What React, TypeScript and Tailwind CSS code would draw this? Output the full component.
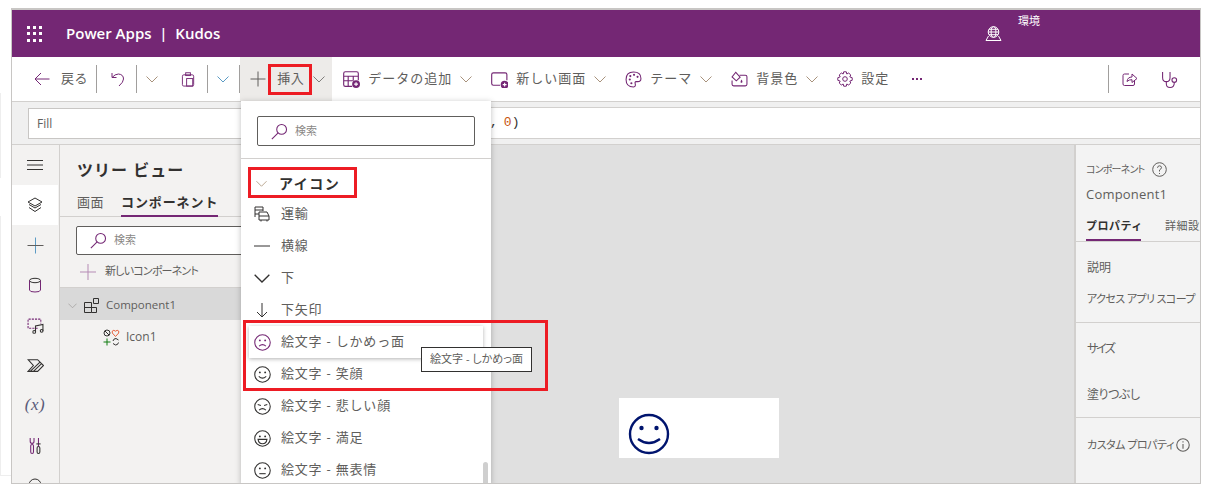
import type { ReactNode } from 'react';

const PURPLE = '#742774';

function Ico({ size = 16, color = PURPLE, sw = 1, children }: { size?: number; color?: string; sw?: number; children: ReactNode }) {
  return (
    <svg width={size} height={size} viewBox="0 0 16 16" fill="none" stroke={color} strokeWidth={sw} className="shrink-0">
      {children}
    </svg>
  );
}

const Chevron = ({ color = '#a8927c', size = 12 }: { color?: string; size?: number }) => (
  <svg width={size} height={size} viewBox="0 0 12 12" fill="none" stroke={color} strokeWidth="1" className="shrink-0">
    <path d="M0.5 3.5 L6 9 L11.5 3.5" />
  </svg>
);

const SearchIcon = () => (
  <Ico size={17}>
    <circle cx="10" cy="6" r="4.6" />
    <path d="M6.7 9.3 L0.8 15.2" />
  </Ico>
);

const Face = ({ mood, color = '#323130' }: { mood: 'frown' | 'smile' | 'sad' | 'happy' | 'flat'; color?: string }) => (
  <Ico size={17} color={color}>
    <circle cx="8" cy="8" r="7.3" />
    {mood === 'sad' ? (
      <path d="M3.5 6.2 L6.5 7 M12.5 6.2 L9.5 7" />
    ) : (
      <>
        <circle cx="5.5" cy="6" r="0.9" fill={color} stroke="none" />
        <circle cx="10.5" cy="6" r="0.9" fill={color} stroke="none" />
      </>
    )}
    {mood === 'frown' && <path d="M4.8 11.5 Q8 8.5 11.2 11.5" />}
    {mood === 'sad' && <path d="M4.8 11.5 Q8 8.5 11.2 11.5" />}
    {mood === 'smile' && <path d="M4.5 9.8 Q8 13 11.5 9.8" />}
    {mood === 'happy' && <path d="M3.8 8.8 H12.2 Q11.5 13 8 13 Q4.5 13 3.8 8.8 Z" />}
    {mood === 'flat' && <path d="M5 11 H11" />}
  </Ico>
);

function ToolItem({ icon, label, chevron = true, className = '' }: { icon: ReactNode; label: string; chevron?: boolean; className?: string }) {
  return (
    <div className={`flex items-center ${className}`}>
      {icon}
      <span className="ml-[8px] tracking-[1px]">{label}</span>
      {chevron && (
        <span className="ml-2">
          <Chevron />
        </span>
      )}
    </div>
  );
}

const Sep = ({ className = '' }: { className?: string }) => <div className={`w-px h-[28px] bg-[#a19f9d] shrink-0 ${className}`} />;

function Toolbar() {
  return (
    <div className="h-[45px] bg-white flex items-center text-[13px] text-[#605e5c] border-b border-[#d2d0ce] shrink-0">
      <svg width="16" height="14" viewBox="0 0 16 14" fill="none" stroke={PURPLE} className="ml-[22px] shrink-0">
        <path d="M15.5 7 H1 M7 1 L1 7 L7 13" />
      </svg>
      <span className="ml-[11px] tracking-[0.6px]">戻る</span>
      <Sep className="ml-[8px]" />
      <span className="ml-[13px]">
        <Ico size={16}>
          <path d="M2 2 V6.5 H6.5 M2 6.5 Q5 3 8.5 3 Q13.5 3.5 13.5 8 Q13.5 11 9 15" />
        </Ico>
      </span>
      <Sep className="ml-[10px]" />
      <span className="ml-[9px]">
        <Chevron />
      </span>
      <span className="ml-[23px]">
        <Ico size={15}>
          <rect x="1.5" y="3" width="12" height="12" rx="1.5" />
          <rect x="5" y="0.8" width="5" height="3" />
          <rect x="6" y="7" width="6.5" height="8" />
        </Ico>
      </span>
      <Sep className="ml-[11px]" />
      <span className="ml-[9px]">
        <Chevron color="#5b9bc4" />
      </span>
      <Sep className="ml-[10px]" />
      <div className="w-[92px] h-[44px] bg-[#edebe9] flex items-center shrink-0">
        <svg width="16" height="16" viewBox="0 0 16 16" stroke="#605e5c" className="ml-[10px]">
          <path d="M8 0.5 V15.5 M0.5 8 H15.5" />
        </svg>
        <span className="ml-[11px] tracking-[0.6px]">挿入</span>
        <span className="ml-[9px]">
          <Chevron color="#7f7d7b" />
        </span>
      </div>
      <ToolItem
        className="ml-[10px]"
        label="データの追加"
        icon={
          <Ico size={18}>
            <path d="M9 14.5 H3 Q1.5 14.5 1.5 13 V3 Q1.5 1.5 3 1.5 H13 Q14.5 1.5 14.5 3 V9 M1.5 5.5 H14.5 M1.5 9.5 H9.5 M5.5 5.5 V14.5 M10 5.5 V9.5" />
            <circle cx="12.5" cy="12.5" r="3.5" fill={PURPLE} stroke="none" />
            <path d="M10.8 12.5 H14.2 M12.5 10.8 V14.2" stroke="#fff" />
          </Ico>
        }
      />
      <ToolItem
        className="ml-[18px]"
        label="新しい画面"
        icon={
          <Ico size={18}>
            <path d="M9 13.5 H3 Q1.5 13.5 1.5 12 V4 Q1.5 2.5 3 2.5 H13.5 Q15 2.5 15 4 V9" />
            <circle cx="13" cy="13" r="3.5" fill={PURPLE} stroke="none" />
            <path d="M11.3 13 H14.7 M13 11.3 V14.7" stroke="#fff" />
          </Ico>
        }
      />
      <ToolItem
        className="ml-[19px]"
        label="テーマ"
        icon={
          <Ico size={17}>
            <path d="M8 1 Q15 1 15 7 Q15 10 12 10 H10.5 Q9 10.2 9.6 12 Q10.4 14.8 8 15 Q1 15 1 8 Q1 1 8 1 Z" />
            <circle cx="4.5" cy="8" r="1" fill={PURPLE} stroke="none" />
            <circle cx="5" cy="4.8" r="1" fill={PURPLE} stroke="none" />
            <circle cx="8.5" cy="3.6" r="1" fill={PURPLE} stroke="none" />
            <circle cx="11.8" cy="5.5" r="1" fill={PURPLE} stroke="none" />
            <circle cx="6" cy="11.5" r="1" fill={PURPLE} stroke="none" />
          </Ico>
        }
      />
      <ToolItem
        className="ml-[19px]"
        label="背景色"
        icon={
          <Ico size={17}>
            <path d="M8 4 H13.5 Q15 4 15 5.5 V12.5 Q15 14 13.5 14 H2.5 Q1 14 1 12.5 V9" />
            <path d="M4.5 1.2 L8.6 5.8 L5 9.3 L1 5.5 Z" />
            <path d="M10 8 Q11.2 9.8 10.6 10.8 Q9.6 11.6 9 10.6 Q8.8 9.6 10 8 Z" fill={PURPLE} stroke="none" />
          </Ico>
        }
      />
      <ToolItem
        className="ml-[19px]"
        label="設定"
        chevron={false}
        icon={
          <Ico size={16}>
            <path d="M6.7 0.8 H9.3 L9.8 3 L11.7 2 L13.8 4 L12.8 5.9 L15.2 6.7 V9.3 L12.8 10.1 L13.8 12 L11.7 14 L9.8 13 L9.3 15.2 H6.7 L6.2 13 L4.3 14 L2.2 12 L3.2 10.1 L0.8 9.3 V6.7 L3.2 5.9 L2.2 4 L4.3 2 L6.2 3 Z" />
            <circle cx="8" cy="8" r="2.3" />
          </Ico>
        }
      />
      <div className="ml-[23px] flex gap-[2px]">
        <span className="w-[2px] h-[2px] bg-[#742774]" />
        <span className="w-[2px] h-[2px] bg-[#742774]" />
        <span className="w-[2px] h-[2px] bg-[#742774]" />
      </div>
      <div className="ml-auto flex items-center">
        <Sep />
        <span className="ml-[13px]">
          <Ico size={16}>
            <path d="M7 3 H2.5 Q1 3 1 4.5 V13 Q1 14.5 2.5 14.5 H11 Q12.5 14.5 12.5 13 V10" />
            <path d="M5 10.5 Q5.5 6 10 6 V3 L15 7.5 L10 11.5 V8.7 Q7 8.5 5 10.5 Z" />
          </Ico>
        </span>
        <span className="ml-[23px] mr-[22px]">
          <Ico size={17}>
            <path d="M1.5 1 V6 Q1.5 10 5 10 Q8.5 10 8.5 6 V1" />
            <path d="M5 10 V12 Q5 15.5 8.5 15.5 Q12.5 15.5 12.5 11" />
            <circle cx="12.5" cy="8.5" r="2.2" />
          </Ico>
        </span>
      </div>
    </div>
  );
}

function RailIcon({ active, children }: { active?: boolean; children: ReactNode }) {
  return <div className={`h-[40px] w-[46px] flex items-center justify-center ${active ? 'bg-white' : ''}`}>{children}</div>;
}

function Rail() {
  return (
    <div className="w-[48px] shrink-0 bg-[#f3f2f1] border-r border-[#d2d0ce] overflow-hidden">
      <RailIcon>
        <svg width="16" height="12" viewBox="0 0 16 12" stroke="#323130">
          <path d="M0 1.5 H16 M0 6 H16 M0 10.5 H16" />
        </svg>
      </RailIcon>
      <RailIcon active>
        <Ico size={16} color="#323130">
          <path d="M8 1 L15 5 L8 9 L1 5 Z M2 7.5 L8 11 L14 7.5 M2 10.5 L8 14.5 L14 10.5" />
        </Ico>
      </RailIcon>
      <RailIcon>
        <svg width="17" height="17" viewBox="0 0 17 17" stroke="#605e5c">
          <path d="M8.5 0.5 V16.5" stroke="#5b9bc4" />
          <path d="M0.5 8.5 H16.5" />
        </svg>
      </RailIcon>
      <RailIcon>
        <Ico size={16} color="#323130">
          <ellipse cx="8" cy="3.5" rx="5.5" ry="2.2" />
          <path d="M2.5 3.5 V13 Q2.5 15 8 15 Q13.5 15 13.5 13 V3.5" stroke={PURPLE} />
        </Ico>
      </RailIcon>
      <RailIcon>
        <Ico size={17} color="#323130">
          <path d="M10 10.5 H1 V2 H13 V6" stroke={PURPLE} strokeDasharray="2 1" />
          <path d="M8 14 V8.5 L15 7 V13" />
          <circle cx="6.8" cy="14" r="1.3" />
          <circle cx="13.8" cy="13" r="1.3" />
        </Ico>
      </RailIcon>
      <RailIcon>
        <Ico size={17} color="#323130">
          <path d="M1 2.5 H10 L15.5 8 L10 13.5 H1 L6 8 Z M3 13.5 L12 5 M6 13.5 L13.5 6.5" />
        </Ico>
      </RailIcon>
      <RailIcon>
        <span className="font-['Liberation_Serif',serif] italic font-normal text-[17px] tracking-[0.5px] text-[#5a5a78]">(x)</span>
      </RailIcon>
      <RailIcon>
        <Ico size={17} color={PURPLE}>
          <rect x="3.5" y="7" width="2.6" height="8.5" rx="1.3" />
          <rect x="9.5" y="9" width="2.6" height="6.5" rx="1.3" stroke="#323130" />
          <path d="M3 1 V4 Q3 6 4.8 6 Q6.6 6 6.6 4 V1 M10.8 1 V9" />
          <path d="M8.8 6.5 H12.8" stroke="#323130" />
        </Ico>
      </RailIcon>
      <RailIcon>
        <Ico size={16} color="#323130">
          <circle cx="8" cy="8" r="6" />
        </Ico>
      </RailIcon>
    </div>
  );
}

function TreePanel() {
  return (
    <div className="w-[430px] shrink-0 bg-[#f3f2f1] text-[#605e5c]">
      <div className="pl-[17px] h-[72px] border-b border-[#d2d0ce] flex flex-col">
        <div className="mt-[14px] text-[16px] font-bold text-[#323130] tracking-[1px] leading-[22px]">ツリー ビュー</div>
        <div className="mt-[12px] flex text-[13px] leading-[18px]">
          <span className="tracking-[0.5px]">画面</span>
          <span className="ml-[17px] h-[24px] border-b-2 border-[#742774] font-semibold text-[#323130] tracking-[0.9px]">コンポーネント</span>
        </div>
      </div>
      <div className="ml-[16px] mt-[9px] w-[300px] h-[29px] bg-white border border-[#605e5c] rounded-[2px] flex items-center pl-[13px] text-[11px] text-[#8a8886]">
        <SearchIcon />
        <span className="ml-[7px]">検索</span>
      </div>
      <div className="ml-[20px] mt-[5px] flex items-center h-[23px] text-[11px] tracking-[-0.8px] [font-feature-settings:'palt']">
        <svg width="16" height="16" viewBox="0 0 16 16" stroke="#b58bb5">
          <path d="M8 0 V16 M0 8 H16" />
        </svg>
        <span className="ml-[9px]">新しいコンポーネント</span>
      </div>
      <div className="mt-[4px] h-[33px] bg-[#d9d9d9] border-t border-[#d2d0ce] flex items-center pl-[8px] pt-[2px] text-[12px]">
        <Chevron size={9} color="#a19f9d" />
        <svg width="15" height="15" viewBox="0 0 15 15" fill="none" stroke="#323130" className="ml-[7px]">
          <path d="M0.5 4.5 H7.5 V14.5 H0.5 Z M0.5 9.5 H12.5 V14.5 H7.5 M9.5 0.5 H14.5 V5.5 H9.5 Z" />
        </svg>
        <span className="ml-[7px] text-[11.5px]">Component1</span>
      </div>
      <div className="h-[34px] flex items-center pl-[43px] text-[12px]">
        <svg width="17" height="17" viewBox="0 0 17 17" fill="none" stroke="#323130">
          <circle cx="4" cy="4" r="3" />
          <path d="M2 2 L6 6" />
          <path d="M12.5 7.5 L9.3 4 Q8.5 1.5 10.8 1.3 L12.5 2.2 L14.2 1.3 Q16.5 1.5 15.7 4 Z" stroke="#e8603c" />
          <path d="M4 9.5 V16.5 M0.5 13 H7.5" stroke="#107c10" />
          <path d="M10 12 Q10.5 9.5 13 9.5 L15.5 11 M15.5 13.5 Q15 16 12.5 16 L10 14.5" />
        </svg>
        <span className="ml-[6px]">Icon1</span>
      </div>
    </div>
  );
}

function PropsPanel() {
  return (
    <div className="w-[126px] shrink-0 bg-[#f3f3f3] border-l-2 border-[#d2d0ce] overflow-hidden text-[12px] text-[#605e5c] whitespace-nowrap">
      <div className="pl-[10px] pt-[15px] h-[97px] border-b border-[#d2d0ce] flex flex-col">
        <div className="flex items-center h-[18px] text-[10px] tracking-[-0.8px] [font-feature-settings:'palt']">
          コンポーネント
          <svg width="15" height="15" viewBox="0 0 15 15" fill="none" stroke="#605e5c" className="ml-[8px]">
            <circle cx="7.5" cy="7.5" r="6.8" />
            <path d="M5.5 5.8 Q5.7 3.8 7.5 3.8 Q9.6 3.9 9.5 5.7 Q9.3 6.9 7.5 8 V9.5 M7.5 11 V12" />
          </svg>
        </div>
        <div className="mt-[7px] text-[13px] leading-[18px] tracking-[0.2px] text-[#605e5c]">Component1</div>
        <div className="mt-[15px] flex text-[11px]">
          <span className="h-[23px] w-[55px] border-b-2 border-[#742774] font-semibold text-[#323130] tracking-[0.5px]">プロパティ</span>
          <span className="ml-[24px] tracking-[0.5px]">詳細設定</span>
        </div>
      </div>
      <div className="pl-[11px] h-[81px] border-b border-[#d2d0ce] flex flex-col">
        <div className="mt-[17px] leading-[18px]">説明</div>
        <div className="mt-[13px] leading-[18px] text-[11px] tracking-[-0.6px] [font-feature-settings:'palt']">アクセス アプリ スコープ</div>
      </div>
      <div className="pl-[11px] h-[95px] border-b border-[#d2d0ce] flex flex-col">
        <div className="mt-[17px] leading-[18px] tracking-[-2px] [font-feature-settings:'palt']">サイズ</div>
        <div className="mt-[28px] leading-[18px] tracking-[-0.5px] [font-feature-settings:'palt']">塗りつぶし</div>
      </div>
      <div className="pl-[11px] pt-[19px] flex items-center text-[11px] tracking-[-0.5px] [font-feature-settings:'palt']">
        カスタム プロパティ
        <svg width="14" height="14" viewBox="0 0 13 13" fill="none" stroke="#605e5c" className="ml-[2px]">
          <circle cx="6.5" cy="6.5" r="5.8" />
          <path d="M6.5 5.5 V10 M6.5 3 V4.2" />
        </svg>
      </div>
    </div>
  );
}

function InsertMenu() {
  const rows: { icon: ReactNode; label: string; hover?: boolean }[] = [
    {
      label: '運輸',
      icon: (
        <Ico size={16} color="#323130">
          <path d="M1 11 V1 H9 V5 M1 4 H9 M1 8 H5 M5 6 H13 L15 10 V14 H5 Z M5 10 H15 M7 14 V15.5 M13 14 V15.5" />
        </Ico>
      ),
    },
    {
      label: '横線',
      icon: (
        <Ico size={16} color="#323130">
          <path d="M0 8 H16" />
        </Ico>
      ),
    },
    { label: '下', icon: <Chevron size={16} color="#323130" /> },
    {
      label: '下矢印',
      icon: (
        <Ico size={16} color="#323130">
          <path d="M8 1 V15 M3 10 L8 15 L13 10" />
        </Ico>
      ),
    },
    { label: '絵文字 - しかめっ面', icon: <Face mood="frown" color={PURPLE} />, hover: true },
    { label: '絵文字 - 笑顔', icon: <Face mood="smile" /> },
    { label: '絵文字 - 悲しい顔', icon: <Face mood="sad" /> },
    { label: '絵文字 - 満足', icon: <Face mood="happy" /> },
    { label: '絵文字 - 無表情', icon: <Face mood="flat" /> },
  ];
  return (
    <div className="absolute left-[229px] top-[91px] w-[250px] h-[384px] bg-white shadow-[0_1px_6px_rgba(0,0,0,0.25)] overflow-hidden text-[13px] text-[#605e5c]">
      <div className="h-[58px] border-b border-[#d2d0ce] pt-[15px] pl-[16px]">
        <div className="w-[218px] h-[30px] border border-[#605e5c] rounded-[2px] flex items-center pl-[13px] text-[11px] text-[#8a8886]">
          <SearchIcon />
          <span className="ml-[7px]">検索</span>
        </div>
      </div>
      <div className="h-[39px] pt-[10px] pl-[15px] flex items-center">
        <Chevron size={11} color="#b5a088" />
        <span className="ml-[12px] text-[14px] font-bold text-[#323130] tracking-[1.5px]">アイコン</span>
      </div>
      <div className="pl-[8px] w-[242px]">
        {rows.map((r) => (
          <div
            key={r.label}
            className={`h-[32px] pl-[5px] flex items-center ${r.hover ? 'bg-white shadow-[0_1px_4px_rgba(0,0,0,0.3)]' : ''}`}
          >
            <span className="w-[16px] flex justify-center">{r.icon}</span>
            <span className="ml-[11px] tracking-[0.8px]">{r.label}</span>
          </div>
        ))}
      </div>
      <div className="absolute right-[3px] bottom-0 w-[5px] h-[23px] rounded-t-[3px] bg-[#cfcfcf]" />
    </div>
  );
}

export default function App() {
  return (
    <div className="w-[1213px] h-[493px] bg-white overflow-hidden font-['Open_Sans','Noto_Sans_CJK_JP',sans-serif] flex pt-[8px]">
      {/* Faint edges of whatever sits behind the captured window */}
      <div className="w-[11px] shrink-0 flex flex-col pt-[85px]">
        <div className="h-[85px] border-l border-[#eeeeee]" />
        <div className="mt-[38px] h-[260px] border-l border-b border-[#eeeeee]" />
      </div>
      <div className="relative w-[1190px] h-[476px] border-x border-b border-t-2 border-[#c8c6c4] flex flex-col overflow-hidden">
        {/* Header */}
        <div className="h-[47px] bg-[#742774] text-white flex items-center shrink-0">
          <div className="ml-[15px] grid grid-cols-3 gap-[3.5px] w-[15px]">
            {Array.from({ length: 9 }).map((_, i) => (
              <span key={i} className="w-[3px] h-[3px] bg-white" />
            ))}
          </div>
          <span className="ml-[24px] text-[15px] font-semibold">Power Apps&nbsp; |&nbsp; Kudos</span>
          <div className="ml-auto mr-[160px] self-start flex items-start">
            <svg width="17" height="15" viewBox="0 0 16 15" fill="none" stroke="#fff" className="mt-[16px]">
              <circle cx="8" cy="6" r="5.3" />
              <ellipse cx="8" cy="6" rx="2.4" ry="5.3" />
              <path d="M2.7 6 H13.3 M3.5 3.3 H12.5 M3.5 8.7 H12.5 M3 10 L0.5 14.5 H15.5 L13 10" />
            </svg>
            <span className="ml-[16px] mt-[3px] text-[11px] leading-[16px]">環境</span>
          </div>
        </div>

        <Toolbar />

        {/* Formula bar */}
        <div className="h-[42px] bg-[#f0f0f0] flex items-start pt-[5px] shrink-0">
          <div className="ml-[16px] mt-[1px] w-[300px] h-[31px] bg-white border border-[#c8c6c4] flex items-center pl-[8px] text-[12px] text-[#605e5c]">
            Fill
          </div>
          <div className="flex-1 h-[32px] bg-white border-y border-[#d2d0ce] flex items-center pl-[162px] font-['Liberation_Mono','DejaVu_Sans_Mono',monospace] text-[13px] text-[#323130]">
            ,<span className="ml-[6px] text-[#c8550e]">0</span>)
          </div>
        </div>

        {/* Workspace */}
        <div className="flex-1 flex min-h-0 border-t border-[#d2d0ce]">
          <Rail />
          <TreePanel />
          <div className="relative flex-1 bg-[#e0e0e0]">
            <div className="absolute left-[129px] top-[253px] w-[160px] h-[60px] bg-white">
              <svg width="42" height="42" viewBox="0 0 42 42" fill="none" stroke="#00146e" strokeWidth="2.4" className="absolute left-[9px] top-[15px]">
                <circle cx="21" cy="21" r="19" />
                <circle cx="13.5" cy="15" r="2.2" fill="#00146e" stroke="none" />
                <circle cx="28.5" cy="15" r="2.2" fill="#00146e" stroke="none" />
                <path d="M10 26 Q21 34 32 26" />
              </svg>
            </div>
          </div>
          <PropsPanel />
        </div>

        <InsertMenu />

        {/* Annotation boxes */}
        <div className="absolute left-[256px] top-[54px] w-[44px] h-[31px] border-[3px] border-[#ed1c24]" />
        <div className="absolute left-[236px] top-[157px] w-[109px] h-[31px] border-[3px] border-[#ed1c24]" />
        <div className="absolute left-[231px] top-[310px] w-[305px] h-[71px] border-[3px] border-[#ed1c24]" />

        {/* Tooltip */}
        <div className="absolute left-[409px] top-[337px] w-[111px] h-[25px] bg-white border border-[#323130] flex items-center justify-center text-[11px] [font-feature-settings:'palt'] text-[#605e5c]">
          絵文字 - しかめっ面
        </div>
      </div>
    </div>
  );
}
